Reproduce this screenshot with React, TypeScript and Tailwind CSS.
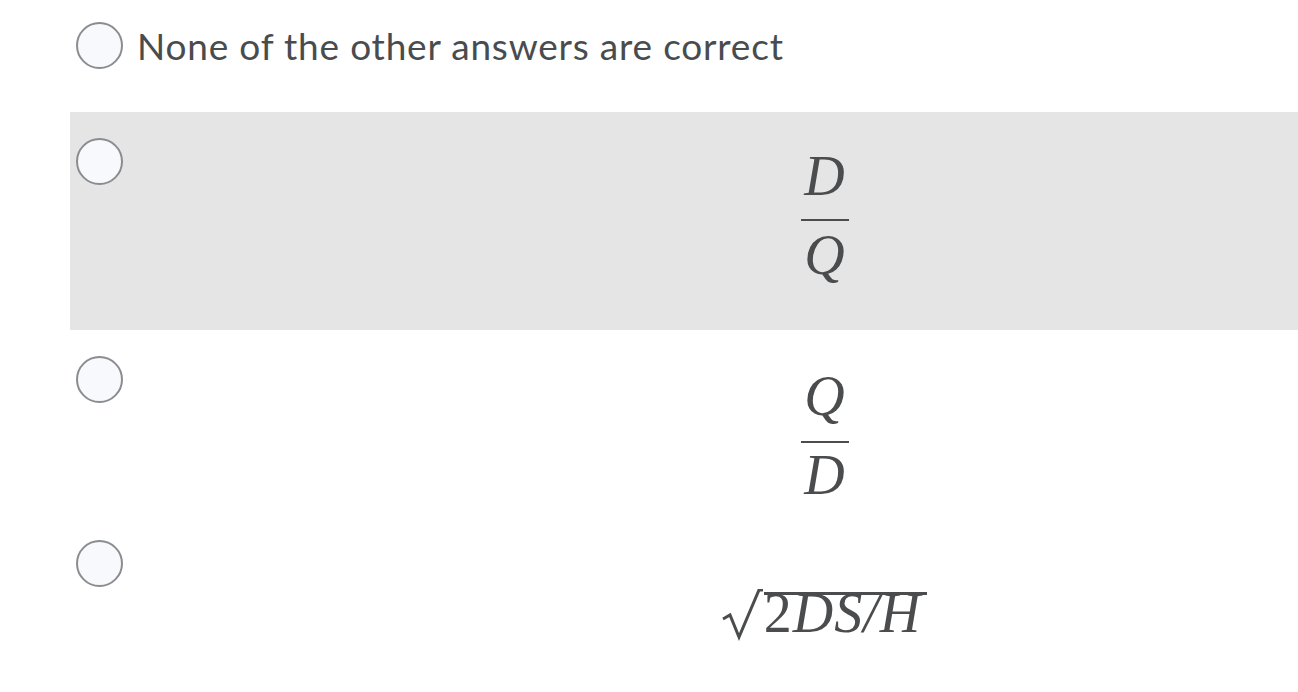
export default function App() {
  const radio = (
    <span className="block h-[47px] w-[47px] shrink-0 rounded-full border-2 border-[#8a8d90] bg-[#f8f9fd]" />
  );
  const math = "font-['Liberation_Serif',serif] italic text-[56px] leading-none text-[#4a4c4e]";

  return (
    <div className="h-[692px] w-[1298px] bg-white font-['Lato',sans-serif] text-[#494c4e]">
      <div className="flex h-[112px] items-start pl-[76px] pt-[22px]">
        {radio}
        <span className="ml-[14px] mt-[2px] text-[37px] leading-[44px] tracking-[0.8px]">None of the other answers are correct</span>
      </div>

      <div className="ml-[70px] flex h-[218px] bg-[#e5e5e5] pl-[6px] pt-[26px]">
        {radio}
        <div className="flex flex-1 justify-center pl-[228px]">
          <div className={`flex flex-col items-center ${math}`}>
            <span className="pt-[10px]">D</span>
            <span className="mt-[15px] h-[2px] w-[48px] bg-[#4a4c4e]" />
            <span className="mt-[6px]">Q</span>
          </div>
        </div>
      </div>

      <div className="ml-[70px] flex h-[210px] pl-[6px] pt-[26px]">
        {radio}
        <div className="flex flex-1 justify-center pl-[228px]">
          <div className={`flex flex-col items-center ${math}`}>
            <span className="pt-[12px]">Q</span>
            <span className="mt-[17px] h-[2px] w-[48px] bg-[#4a4c4e]" />
            <span className="mt-[4px]">D</span>
          </div>
        </div>
      </div>

      <div className="ml-[70px] flex pl-[6px]">
        {radio}
        <div className="flex flex-1 justify-center pl-[228px] pt-[49px]">
          <div className={`flex items-end ${math}`}>
            <svg width="42" height="52" viewBox="0 0 42 52" className="mb-[-10px]">
              <path d="M1 30 L8 26 L17 48 L37 1 L41 1" fill="none" stroke="#4a4c4e" strokeWidth="3" strokeLinejoin="miter" />
            </svg>
            <span className="border-t-[3px] border-[#4a4c4e] pr-[6px] leading-[36px] not-italic tracking-[1px]">
              <span>2</span>
              <span className="italic">DS</span>
              <span className="italic">/</span>
              <span className="italic">H</span>
            </span>
          </div>
        </div>
      </div>
    </div>
  );
}
